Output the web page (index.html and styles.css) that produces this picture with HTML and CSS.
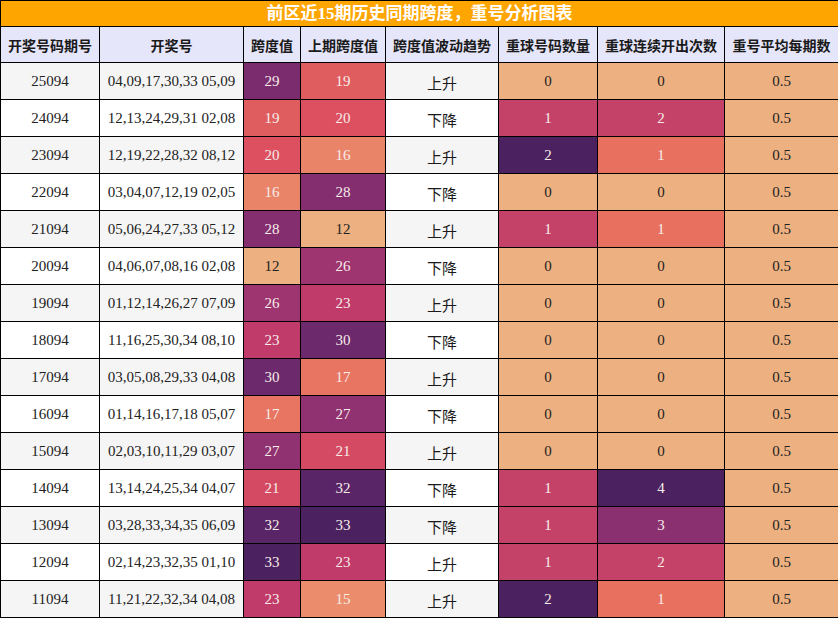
FILE: index.html
```html
<!DOCTYPE html>
<html lang="zh">
<head>
<meta charset="utf-8">
<title>前区近15期历史同期跨度，重号分析图表</title>
<link rel="stylesheet" href="styles.css">
</head>
<body>
<table class="chart">
<colgroup>
<col class="c1"><col class="c2"><col class="c3"><col class="c4"><col class="c5"><col class="c6"><col class="c7"><col class="c8">
</colgroup>
<thead>
<tr class="title-row"><th colspan="8" class="title">前区近15期历史同期跨度，重号分析图表</th></tr>
<tr class="head-row">
<th>开奖号码期号</th><th>开奖号</th><th>跨度值</th><th>上期跨度值</th><th>跨度值波动趋势</th><th>重球号码数量</th><th>重球连续开出次数</th><th>重号平均每期数</th>
</tr>
</thead>
<tbody>
<tr><td>25094</td><td>04,09,17,30,33 05,09</td><td class="h29">29</td><td class="h19">19</td><td class="trend">上升</td><td class="h0">0</td><td class="h0">0</td><td class="h0">0.5</td></tr>
<tr><td>24094</td><td>12,13,24,29,31 02,08</td><td class="h19">19</td><td class="h20">20</td><td class="trend">下降</td><td class="r1">1</td><td class="s2">2</td><td class="h0">0.5</td></tr>
<tr><td>23094</td><td>12,19,22,28,32 08,12</td><td class="h20">20</td><td class="h16">16</td><td class="trend">上升</td><td class="r2">2</td><td class="s1">1</td><td class="h0">0.5</td></tr>
<tr><td>22094</td><td>03,04,07,12,19 02,05</td><td class="h16">16</td><td class="h28">28</td><td class="trend">下降</td><td class="h0">0</td><td class="h0">0</td><td class="h0">0.5</td></tr>
<tr><td>21094</td><td>05,06,24,27,33 05,12</td><td class="h28">28</td><td class="h12">12</td><td class="trend">上升</td><td class="r1">1</td><td class="s1">1</td><td class="h0">0.5</td></tr>
<tr><td>20094</td><td>04,06,07,08,16 02,08</td><td class="h12">12</td><td class="h26">26</td><td class="trend">下降</td><td class="h0">0</td><td class="h0">0</td><td class="h0">0.5</td></tr>
<tr><td>19094</td><td>01,12,14,26,27 07,09</td><td class="h26">26</td><td class="h23">23</td><td class="trend">上升</td><td class="h0">0</td><td class="h0">0</td><td class="h0">0.5</td></tr>
<tr><td>18094</td><td>11,16,25,30,34 08,10</td><td class="h23">23</td><td class="h30">30</td><td class="trend">下降</td><td class="h0">0</td><td class="h0">0</td><td class="h0">0.5</td></tr>
<tr><td>17094</td><td>03,05,08,29,33 04,08</td><td class="h30">30</td><td class="h17">17</td><td class="trend">上升</td><td class="h0">0</td><td class="h0">0</td><td class="h0">0.5</td></tr>
<tr><td>16094</td><td>01,14,16,17,18 05,07</td><td class="h17">17</td><td class="h27">27</td><td class="trend">下降</td><td class="h0">0</td><td class="h0">0</td><td class="h0">0.5</td></tr>
<tr><td>15094</td><td>02,03,10,11,29 03,07</td><td class="h27">27</td><td class="h21">21</td><td class="trend">上升</td><td class="h0">0</td><td class="h0">0</td><td class="h0">0.5</td></tr>
<tr><td>14094</td><td>13,14,24,25,34 04,07</td><td class="h21">21</td><td class="h32">32</td><td class="trend">下降</td><td class="r1">1</td><td class="s4">4</td><td class="h0">0.5</td></tr>
<tr><td>13094</td><td>03,28,33,34,35 06,09</td><td class="h32">32</td><td class="h33">33</td><td class="trend">下降</td><td class="r1">1</td><td class="s3">3</td><td class="h0">0.5</td></tr>
<tr><td>12094</td><td>02,14,23,32,35 01,10</td><td class="h33">33</td><td class="h23">23</td><td class="trend">上升</td><td class="r1">1</td><td class="s2">2</td><td class="h0">0.5</td></tr>
<tr><td>11094</td><td>11,21,22,32,34 04,08</td><td class="h23">23</td><td class="h15">15</td><td class="trend">上升</td><td class="r2">2</td><td class="s1">1</td><td class="h0">0.5</td></tr>
</tbody>
</table>
</body>
</html>
```
FILE: styles.css
```css
html, body {
  margin: 0;
  padding: 0;
  background: #ffffff;
}

.chart {
  width: 838px;
  table-layout: fixed;
  border-collapse: collapse;
  font-family: "Liberation Serif", "Noto Sans CJK SC", serif;
  font-size: 15px;
  color: #222222;
}

.c1 { width: 99px; }
.c2 { width: 144px; }
.c3 { width: 57px; }
.c4 { width: 85px; }
.c5 { width: 113px; }
.c6 { width: 99px; }
.c7 { width: 127px; }
.c8 { width: 114px; }

.chart th,
.chart td {
  border: 1px solid #000000;
  padding: 0;
  text-align: center;
  white-space: nowrap;
  overflow: hidden;
  line-height: 18px;
}

.title-row th {
  height: 25px;
  background: #ffa500;
  color: #ffffff;
  font-size: 17px;
  font-weight: bold;
  line-height: 22px;
}

.head-row th {
  height: 35px;
  background: #e6e6fa;
  color: #1a1a1a;
  font-size: 14px;
  font-weight: bold;
  font-family: "Noto Sans CJK SC", sans-serif;
}

.chart tbody tr {
  background: #ffffff;
}

.chart tbody tr:nth-child(odd) {
  background: #f5f5f5;
}

.chart td {
  height: 36px;
}

.chart td.trend {
  font-family: "Noto Sans CJK SC", sans-serif;
  font-size: 15px;
  height: 33px;
  padding-top: 3px;
  color: #1a1a1a;
}

/* heat colours (flare palette) */
.chart td.h12, .chart td.h0 { background: #edb081; color: #222222; }
.chart td.h15 { background: #eb8d6c; color: #f6ece8; }
.chart td.h16 { background: #ea8468; color: #f6ece8; }
.chart td.h17 { background: #e87561; color: #f6ece8; }
.chart td.h19 { background: #e05d5f; color: #f6ece8; }
.chart td.h20 { background: #dc5060; color: #f6ece8; }
.chart td.h21 { background: #d44a63; color: #f6ece8; }
.chart td.h23 { background: #c03a6a; color: #f6ece8; }
.chart td.h26 { background: #9e3470; color: #f6ece8; }
.chart td.h27 { background: #903171; color: #f6ece8; }
.chart td.h28 { background: #842e70; color: #f6ece8; }
.chart td.h29 { background: #7a2c6f; color: #f6ece8; }
.chart td.h30 { background: #6c296c; color: #f6ece8; }
.chart td.h32 { background: #5a2567; color: #f6ece8; }
.chart td.h33 { background: #4b2160; color: #f6ece8; }

.chart td.r1 { background: #c44268; color: #f6ece8; }
.chart td.r2 { background: #4b2160; color: #f6ece8; }

.chart td.s1 { background: #e7705f; color: #f6ece8; }
.chart td.s2 { background: #c44268; color: #f6ece8; }
.chart td.s3 { background: #8a2f70; color: #f6ece8; }
.chart td.s4 { background: #4b2160; color: #f6ece8; }
```
